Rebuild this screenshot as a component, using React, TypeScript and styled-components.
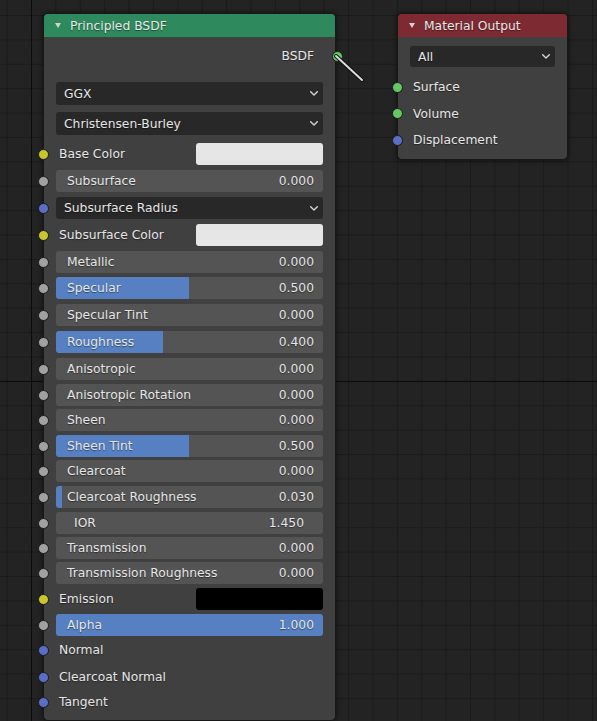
import React from "react";
import styled, { createGlobalStyle } from "styled-components";

const GlobalStyle = createGlobalStyle`
  html, body {
    margin: 0;
    padding: 0;
    background: #232323;
  }
  body {
    font-family: "DejaVu Sans", "Liberation Sans", sans-serif;
  }
`;

const Canvas = styled.div`
  position: relative;
  width: 597px;
  height: 721px;
  overflow: hidden;
  background-color: #232323;
  background-image:
    linear-gradient(to right, transparent 31px, #0c0c0c 31px, #0c0c0c 32px, transparent 32px),
    linear-gradient(to bottom, transparent 381px, #0c0c0c 381px, #0c0c0c 382px, transparent 382px),
    linear-gradient(to right, #1b1b1b 1px, transparent 1px),
    linear-gradient(to bottom, #1b1b1b 1px, transparent 1px);
  background-size: 100% 100%, 100% 100%, 24.4px 24.4px, 24.4px 24.4px;
  background-position: 0 0, 0 0, 6.6px 15px, 6.6px 15px;
  background-repeat: no-repeat, no-repeat, repeat, repeat;
  font-size: 12.3px;
  color: #e6e6e6;
  text-shadow: 0 1px 1px rgba(0, 0, 0, 0.45);
`;

const Node = styled.div<{ $x: number; $y: number; $w: number; $h: number }>`
  position: absolute;
  left: ${(p) => p.$x}px;
  top: ${(p) => p.$y}px;
  width: ${(p) => p.$w}px;
  height: ${(p) => p.$h}px;
  box-sizing: border-box;
  display: flex;
  flex-direction: column;
  background: #404040;
  border: 1px solid #171717;
  border-radius: 5px;
  box-shadow: 0 0 5px rgba(0, 0, 0, 0.6);
`;

const Header = styled.div<{ $color: string }>`
  height: 23px;
  flex: none;
  display: flex;
  align-items: center;
  gap: 9px;
  padding-left: 11px;
  background: ${(p) => p.$color};
  border-radius: 4px 4px 0 0;
  color: #e8e8e8;
`;

const Collapse = styled.span`
  width: 0;
  height: 0;
  border-left: 3px solid transparent;
  border-right: 3px solid transparent;
  border-top: 5px solid #d2d2d2;
`;

const Body = styled.div<{ $top: number }>`
  position: relative;
  display: flex;
  flex-direction: column;
  padding: ${(p) => p.$top}px 12px 0 12px;
`;

const OutputRow = styled.div`
  position: relative;
  height: 26px;
  flex: none;
  display: flex;
  align-items: center;
  justify-content: flex-end;
  padding-right: 9px;
`;

const Stack = styled.div<{ $mt: number; $mb: number }>`
  display: flex;
  flex-direction: column;
  gap: 7px;
  margin: ${(p) => p.$mt}px 0 ${(p) => p.$mb}px;
`;

const Dropdown = styled.div<{ $h?: number }>`
  flex: 1 0 auto;
  height: ${(p) => p.$h ?? 22}px;
  box-sizing: border-box;
  display: flex;
  align-items: center;
  justify-content: space-between;
  padding: 0 5px 0 8px;
  background: #282828;
  border-radius: 3px;
`;

const Row = styled.div<{ $h: number }>`
  position: relative;
  height: ${(p) => p.$h}px;
  flex: none;
  display: flex;
  align-items: flex-start;
`;

const Socket = styled.span<{ $c: string; $right?: boolean }>`
  position: absolute;
  ${(p) => (p.$right ? "right: -19.5px;" : "left: -18.5px;")}
  top: ${(p) => (p.$right ? "7.5px" : "5.5px")};
  width: 11px;
  height: 11px;
  box-sizing: border-box;
  border-radius: 50%;
  border: 1px solid #1a1a1a;
  background: ${(p) => p.$c};
`;

const Slider = styled.div<{ $fill: number; $padL: number; $padR: number }>`
  flex: 1 0 auto;
  height: 22px;
  box-sizing: border-box;
  display: flex;
  align-items: center;
  justify-content: space-between;
  padding: 0 ${(p) => p.$padR}px 0 ${(p) => p.$padL}px;
  border-radius: 3px;
  background: linear-gradient(
    to right,
    #5680c2 ${(p) => p.$fill}%,
    #545454 ${(p) => p.$fill}%
  );
`;

const Label = styled.span`
  height: 22px;
  line-height: 22px;
  padding-left: 3px;
  white-space: nowrap;
`;

const Swatch = styled.div<{ $c: string }>`
  width: 127px;
  height: 22px;
  margin-left: auto;
  border-radius: 3px;
  background: ${(p) => p.$c};
`;

const Wire = styled.svg`
  position: absolute;
  left: 0;
  top: 0;
  pointer-events: none;
`;

const Chevron = () => (
  <svg width="8" height="5" viewBox="0 0 8 5">
    <polyline
      points="0.7,0.7 4,4 7.3,0.7"
      fill="none"
      stroke="#d4d4d4"
      strokeWidth="1.4"
      strokeLinecap="round"
      strokeLinejoin="round"
    />
  </svg>
);

const YELLOW = "#c7c729";
const GRAY = "#a1a1a1";
const BLUE = "#5a6ec4";
const GREEN = "#63c763";

type Input =
  | { kind: "color"; label: string; color: string; h: number }
  | { kind: "value"; label: string; value: string; fill: number; h: number; field?: boolean }
  | { kind: "menu"; label: string; h: number }
  | { kind: "vector"; label: string; h: number };

const inputs: Input[] = [
  { kind: "color", label: "Base Color", color: "#e6e6e6", h: 27 },
  { kind: "value", label: "Subsurface", value: "0.000", fill: 0, h: 27 },
  { kind: "menu", label: "Subsurface Radius", h: 27 },
  { kind: "color", label: "Subsurface Color", color: "#e6e6e6", h: 27 },
  { kind: "value", label: "Metallic", value: "0.000", fill: 0, h: 26 },
  { kind: "value", label: "Specular", value: "0.500", fill: 50, h: 27 },
  { kind: "value", label: "Specular Tint", value: "0.000", fill: 0, h: 27 },
  { kind: "value", label: "Roughness", value: "0.400", fill: 40, h: 27 },
  { kind: "value", label: "Anisotropic", value: "0.000", fill: 0, h: 26 },
  { kind: "value", label: "Anisotropic Rotation", value: "0.000", fill: 0, h: 25 },
  { kind: "value", label: "Sheen", value: "0.000", fill: 0, h: 26 },
  { kind: "value", label: "Sheen Tint", value: "0.500", fill: 50, h: 25 },
  { kind: "value", label: "Clearcoat", value: "0.000", fill: 0, h: 26 },
  { kind: "value", label: "Clearcoat Roughness", value: "0.030", fill: 2.4, h: 26 },
  { kind: "value", label: "IOR", value: "1.450", fill: 0, h: 25, field: true },
  { kind: "value", label: "Transmission", value: "0.000", fill: 0, h: 25 },
  { kind: "value", label: "Transmission Roughness", value: "0.000", fill: 0, h: 26 },
  { kind: "color", label: "Emission", color: "#000000", h: 26 },
  { kind: "value", label: "Alpha", value: "1.000", fill: 100, h: 25 },
  { kind: "vector", label: "Normal", h: 27 },
  { kind: "vector", label: "Clearcoat Normal", h: 25 },
  { kind: "vector", label: "Tangent", h: 26 },
];

const socketColor = (i: Input) => {
  if (i.kind === "color") return YELLOW;
  if (i.kind === "value") return GRAY;
  return BLUE;
};

const InputRow = ({ input }: { input: Input }) => (
  <Row $h={input.h}>
    <Socket $c={socketColor(input)} />
    {input.kind === "color" && (
      <>
        <Label>{input.label}</Label>
        <Swatch $c={input.color} />
      </>
    )}
    {input.kind === "value" && (
      <Slider
        $fill={input.fill}
        $padL={input.field ? 18 : 11}
        $padR={input.field ? 19 : 9}
      >
        <span>{input.label}</span>
        <span>{input.value}</span>
      </Slider>
    )}
    {input.kind === "menu" && (
      <Dropdown>
        <span>{input.label}</span>
        <Chevron />
      </Dropdown>
    )}
    {input.kind === "vector" && <Label>{input.label}</Label>}
  </Row>
);

const outputs = [
  { label: "Surface", color: GREEN },
  { label: "Volume", color: GREEN },
  { label: "Displacement", color: BLUE },
];

export default function App() {
  return (
    <>
      <GlobalStyle />
      <Canvas>
        <Node $x={43} $y={13} $w={293} $h={708}>
          <Header $color="#2e8a5d">
            <Collapse />
            <span>Principled BSDF</span>
          </Header>
          <Body $top={6}>
            <OutputRow>
              <span>BSDF</span>
              <Socket $c={GREEN} $right />
            </OutputRow>
            <Stack $mt={13} $mb={8}>
              <Dropdown $h={23}>
                <span>GGX</span>
                <Chevron />
              </Dropdown>
              <Dropdown $h={23}>
                <span>Christensen-Burley</span>
                <Chevron />
              </Dropdown>
            </Stack>
            {inputs.map((input) => (
              <InputRow key={input.label} input={input} />
            ))}
          </Body>
        </Node>

        <Node $x={397} $y={13} $w={171} $h={147}>
          <Header $color="#7e2a32">
            <Collapse />
            <span>Material Output</span>
          </Header>
          <Body $top={9}>
            <Stack $mt={0} $mb={9}>
              <Dropdown $h={21}>
                <span>All</span>
                <Chevron />
              </Dropdown>
            </Stack>
            {outputs.map((o) => (
              <Row key={o.label} $h={26.7}>
                <Socket $c={o.color} />
                <Label>{o.label}</Label>
              </Row>
            ))}
          </Body>
        </Node>

        <Wire width="597" height="721">
          <line x1="336" y1="56" x2="362" y2="80" stroke="#111" strokeWidth="4" strokeLinecap="round" />
          <line x1="336" y1="56" x2="362" y2="80" stroke="#dcdcdc" strokeWidth="2" strokeLinecap="round" />
        </Wire>
      </Canvas>
    </>
  );
}
